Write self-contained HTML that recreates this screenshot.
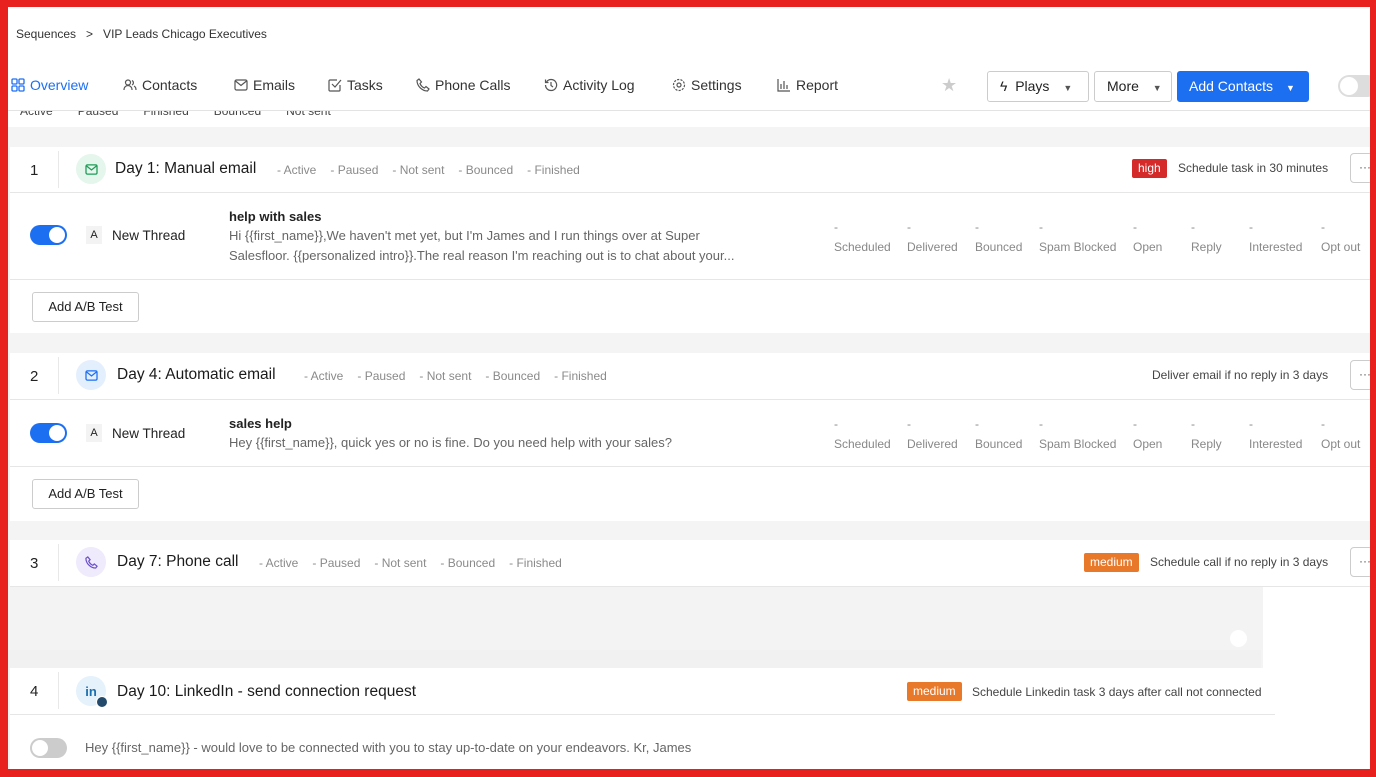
<!DOCTYPE html>
<html><head><meta charset="utf-8"><style>
*{box-sizing:border-box;margin:0;padding:0}
body{width:1376px;height:777px;overflow:hidden;background:#e8211f;font-family:"Liberation Sans",sans-serif;color:#222;position:relative}
#p{position:absolute;left:8px;top:7px;width:1362px;height:762px;background:#f4f4f4;overflow:hidden}
.a{position:absolute;white-space:nowrap}
.hdr{position:absolute;left:0;top:0;width:1362px;height:120px;background:#fff}
.tab{position:absolute;top:70px;font-size:14px;color:#333;display:flex;align-items:center;gap:5px}
.card{position:absolute;left:2px;width:1370px;background:#fff}
.line{position:absolute;left:0;right:0;height:1px;background:#e6e6e6}
.num{position:absolute;left:20px;font-size:15px;color:#222}
.vsep{position:absolute;left:48px;width:1px;background:#e8e8e8}
.ic{position:absolute;left:66px;width:30px;height:30px;border-radius:50%;display:flex;align-items:center;justify-content:center}
.title{position:absolute;font-size:15.5px;color:#1b1b1b}
.meta{position:absolute;font-size:12px;color:#8a8a8a;white-space:nowrap}
.meta span{margin-right:14px}
.tog{position:absolute;left:20px;width:37px;height:20px;border-radius:10px;background:#1d6ff2}
.tog::after{content:"";position:absolute;right:2px;top:2px;width:16px;height:16px;border-radius:50%;background:#fff}
.tog.off{background:#ccc}.tog.off::after{left:2px;right:auto}
.abadge{position:absolute;left:76px;width:16px;height:18px;background:#f3f3f3;font-size:11px;text-align:center;line-height:18px}
.nt{position:absolute;left:102px;font-size:13.5px;color:#222}
.subj{position:absolute;left:219px;font-size:13px;font-weight:bold;color:#222}
.bodyt{position:absolute;left:219px;font-size:13px;color:#666;line-height:20px;white-space:nowrap}
.abbtn{position:absolute;left:22px;width:107px;height:30px;border:1px solid #ccc;border-radius:3px;font-size:13px;text-align:center;line-height:28px;color:#222;background:#fff}
.dots{position:absolute;left:1340px;width:30px;height:30px;border:1px solid #ccc;border-radius:4px;font-size:12px;line-height:26px;padding-left:8px;color:#555}
.badge{position:absolute;font-size:12px;color:#fff;padding:0 6px;height:19px;line-height:19px;border-radius:2px}
.right{position:absolute;font-size:12px;color:#444;white-space:nowrap}
.btn{position:absolute;top:64px;height:31px;border:1px solid #ccc;border-radius:3px;background:#fff;font-size:14px;line-height:29px;color:#222;white-space:nowrap}
.st{position:absolute;font-size:12px;color:#888;font-family:"Liberation Sans",sans-serif;line-height:20px}
</style></head><body><div id="p">
<div class="hdr">
 <div class="a" style="left:8px;top:20px;font-size:12px;color:#333">Sequences &nbsp;&nbsp;&gt;&nbsp;&nbsp; VIP Leads Chicago Executives</div>
 <div class="tab" style="left:3px;color:#1d6ff2"><svg width="14" height="14" viewBox="0 0 14 14" fill="none" stroke="#1d6ff2" stroke-width="1.3"><rect x="1" y="1" width="5" height="5" rx="1"/><rect x="8" y="1" width="5" height="5" rx="1"/><rect x="1" y="8" width="5" height="5" rx="1"/><rect x="8" y="8" width="5" height="5" rx="1"/></svg>Overview</div>
 <div class="tab" style="left:115px"><svg width="14" height="14" viewBox="0 0 14 14" fill="none" stroke="#555" stroke-width="1.2"><circle cx="5" cy="4.5" r="2.5"/><path d="M1 12c0-3 2-4.5 4-4.5s4 1.5 4 4.5M9 2.5a2.5 2.5 0 010 4.5M11 8c1.5.8 2 2 2 4"/></svg>Contacts</div>
 <div class="tab" style="left:226px"><svg width="14" height="12" viewBox="0 0 14 12" fill="none" stroke="#555" stroke-width="1.2"><rect x="1" y="1" width="12" height="10" rx="1.5"/><path d="M1.5 2l5.5 4.5L12.5 2"/></svg>Emails</div>
 <div class="tab" style="left:320px"><svg width="14" height="14" viewBox="0 0 14 14" fill="none" stroke="#555" stroke-width="1.2"><path d="M12 7v5a1 1 0 01-1 1H2a1 1 0 01-1-1V3a1 1 0 011-1h7"/><path d="M4 6l3 3 6-7"/></svg>Tasks</div>
 <div class="tab" style="left:408px"><svg width="14" height="14" viewBox="0 0 14 14" fill="none" stroke="#555" stroke-width="1.2"><path d="M3 1l2.5 3-1.5 1.5c.8 2 2.5 3.7 4.5 4.5L10 8.5l3 2.5-1.5 2C6 13 1 8 1 2.5z"/></svg>Phone Calls</div>
 <div class="tab" style="left:536px"><svg width="14" height="14" viewBox="0 0 14 14" fill="none" stroke="#555" stroke-width="1.2"><path d="M2.5 4A5.5 5.5 0 117 12.5 5.5 5.5 0 011.5 7"/><path d="M1.5 1.5v3h3M7 4v3.5l2 1.5"/></svg>Activity Log</div>
 <div class="tab" style="left:664px"><svg width="14" height="14" viewBox="0 0 14 14" fill="none" stroke="#555" stroke-width="1.2"><circle cx="7" cy="7" r="2"/><circle cx="7" cy="7" r="5.5" stroke-dasharray="2.2 1.2"/></svg>Settings</div>
 <div class="tab" style="left:769px"><svg width="14" height="14" viewBox="0 0 14 14" fill="none" stroke="#555" stroke-width="1.2"><path d="M1 1v12h12M4 11V6M7 11V3M10 11V7"/></svg>Report</div>
 <div class="a" style="left:933px;top:68px;font-size:18px;color:#ccc">★</div>
 <div class="btn" style="left:979px;width:102px;padding-left:12px">ϟ&nbsp; Plays <span style="font-size:9px;margin-left:10px;color:#555">▼</span></div>
 <div class="btn" style="left:1086px;width:78px;padding-left:12px">More <span style="font-size:9px;margin-left:10px;color:#555">▼</span></div>
 <div class="btn" style="left:1169px;width:132px;background:#1d6ff2;border-color:#1d6ff2;color:#fff;padding-left:11px">Add Contacts <span style="font-size:9px;margin-left:9px">▼</span></div>
 <div class="a" style="left:1330px;top:68px;width:40px;height:22px;border-radius:11px;background:#ddd"><div style="position:absolute;left:2px;top:2px;width:18px;height:18px;border-radius:50%;background:#fff"></div></div>
 <div class="line" style="top:103px;background:#e3e3e3"></div>
 <div class="a" style="left:12px;top:104px;width:600px;height:6px;overflow:hidden"><div style="position:absolute;top:-7px;left:0;font-size:12px;color:#444;white-space:nowrap">Active<span style="margin-left:25px">Paused</span><span style="margin-left:25px">Finished</span><span style="margin-left:25px">Bounced</span><span style="margin-left:25px">Not sent</span></div></div>
</div>

<div class="card" style="top:140px;height:186px">
 <div class="num" style="top:15px">1</div><div class="vsep" style="top:4px;height:37px"></div>
 <div class="ic" style="top:7px;background:#e5f6ec"><svg width="13" height="11" viewBox="0 0 14 12" fill="none" stroke="#1e9c56" stroke-width="1.4"><rect x="1" y="1" width="12" height="10" rx="1.5"/><path d="M1.5 2l5.5 4.5L12.5 2"/></svg></div>
 <div class="title" style="left:105px;top:13px">Day 1: Manual email</div>
 <div class="meta" style="left:267px;top:16px"><span>- Active</span><span>- Paused</span><span>- Not sent</span><span>- Bounced</span><span>- Finished</span></div>
 <div class="badge" style="left:1122px;top:12px;background:#d42a2a">high</div>
 <div class="right" style="left:1168px;top:14px">Schedule task in 30 minutes</div>
 <div class="dots" style="top:6px">···</div>
 <div class="line" style="top:45px"></div>
 <div class="tog" style="top:78px"></div><div class="abadge" style="top:79px">A</div><div class="nt" style="top:81px">New Thread</div>
 <div class="subj" style="top:62px">help with sales</div>
 <div class="bodyt" style="top:79px">Hi {{first_name}},We haven't met yet, but I'm James and I run things over at Super<br>Salesfloor. {{personalized intro}}.The real reason I'm reaching out is to chat about your...</div>
 <div class="line" style="top:132px"></div>
 <div class="abbtn" style="top:145px">Add A/B Test</div>
</div>
<div class="card" style="top:346px;height:168px">
 <div class="num" style="top:15px">2</div><div class="vsep" style="top:4px;height:37px"></div>
 <div class="ic" style="top:7px;background:#e3effd"><svg width="13" height="11" viewBox="0 0 14 12" fill="none" stroke="#1d6ff2" stroke-width="1.4"><rect x="1" y="1" width="12" height="10" rx="1.5"/><path d="M1.5 2l5.5 4.5L12.5 2"/></svg></div>
 <div class="title" style="left:107px;top:13px">Day 4: Automatic email</div>
 <div class="meta" style="left:294px;top:16px"><span>- Active</span><span>- Paused</span><span>- Not sent</span><span>- Bounced</span><span>- Finished</span></div>
 <div class="right" style="left:1142px;top:15px">Deliver email if no reply in 3 days</div>
 <div class="dots" style="top:7px">···</div>
 <div class="line" style="top:46px"></div>
 <div class="tog" style="top:70px"></div><div class="abadge" style="top:71px">A</div><div class="nt" style="top:73px">New Thread</div>
 <div class="subj" style="top:63px">sales help</div>
 <div class="bodyt" style="top:80px">Hey {{first_name}}, quick yes or no is fine. Do you need help with your sales?</div>
 <div class="line" style="top:113px"></div>
 <div class="abbtn" style="top:126px">Add A/B Test</div>
</div>
<div class="card" style="top:533px;height:110px;background:#fff">
 <div class="num" style="top:15px">3</div><div class="vsep" style="top:4px;height:37px"></div>
 <div class="ic" style="top:7px;background:#efeafc"><svg width="13" height="13" viewBox="0 0 14 14" fill="none" stroke="#6a4fc9" stroke-width="1.3"><path d="M3 1l2.5 3-1.5 1.5c.8 2 2.5 3.7 4.5 4.5L10 8.5l3 2.5-1.5 2C6 13 1 8 1 2.5z"/></svg></div>
 <div class="title" style="left:107px;top:13px">Day 7: Phone call</div>
 <div class="meta" style="left:249px;top:16px"><span>- Active</span><span>- Paused</span><span>- Not sent</span><span>- Bounced</span><span>- Finished</span></div>
 <div class="badge" style="left:1074px;top:13px;background:#e8792b">medium</div>
 <div class="right" style="left:1140px;top:15px">Schedule call if no reply in 3 days</div>
 <div class="dots" style="top:7px">···</div>
 <div class="line" style="top:46px"></div>
 <div class="a" style="left:0;top:47px;width:1253px;height:63px;background:#f3f3f3"></div>
 <div class="a" style="left:1220px;top:90px;width:17px;height:17px;border-radius:50%;background:#fff"></div>
 <div class="a" style="left:1253px;top:47px;width:120px;height:90px;background:#fff"></div>
</div>
<div class="a" style="left:0;top:643px;width:1253px;height:18px;background:#f1f1f1"></div>
<div class="a" style="left:1255px;top:643px;width:120px;height:18px;background:#fff"></div>
<div class="card" style="top:661px;height:110px">
 <div class="num" style="top:15px">4</div><div class="vsep" style="top:4px;height:37px"></div>
 <div class="ic" style="top:8px;background:#e5f1fb;color:#1a6fb0;font-size:13px;font-weight:bold">in<div style="position:absolute;right:-2px;bottom:-2px;width:12px;height:12px;border-radius:50%;background:#234a6b;border:1.5px solid #fff"></div></div>
 <div class="title" style="left:107px;top:15px">Day 10: LinkedIn - send connection request</div>
 <div class="badge" style="left:897px;top:14px;background:#e8792b">medium</div>
 <div class="right" style="left:962px;top:17px">Schedule Linkedin task 3 days after call not connected</div>
 <div class="a" style="left:0;top:46px;height:1px;background:#e6e6e6;width:1265px"></div>
 <div class="tog off" style="top:70px"></div>
 <div class="bodyt" style="left:75px;top:70px">Hey {{first_name}} - would love to be connected with you to stay up-to-date on your endeavors. Kr, James</div>
</div>
</div>
<div class="st" style="left:834px;top:217px">-<br>Scheduled</div>
<div class="st" style="left:907px;top:217px">-<br>Delivered</div>
<div class="st" style="left:975px;top:217px">-<br>Bounced</div>
<div class="st" style="left:1039px;top:217px">-<br>Spam Blocked</div>
<div class="st" style="left:1133px;top:217px">-<br>Open</div>
<div class="st" style="left:1191px;top:217px">-<br>Reply</div>
<div class="st" style="left:1249px;top:217px">-<br>Interested</div>
<div class="st" style="left:1321px;top:217px">-<br>Opt out</div>
<div class="st" style="left:834px;top:414px">-<br>Scheduled</div>
<div class="st" style="left:907px;top:414px">-<br>Delivered</div>
<div class="st" style="left:975px;top:414px">-<br>Bounced</div>
<div class="st" style="left:1039px;top:414px">-<br>Spam Blocked</div>
<div class="st" style="left:1133px;top:414px">-<br>Open</div>
<div class="st" style="left:1191px;top:414px">-<br>Reply</div>
<div class="st" style="left:1249px;top:414px">-<br>Interested</div>
<div class="st" style="left:1321px;top:414px">-<br>Opt out</div>
<div style="position:absolute;left:1370px;top:0;width:6px;height:777px;background:#e8211f"></div>
</body></html>
